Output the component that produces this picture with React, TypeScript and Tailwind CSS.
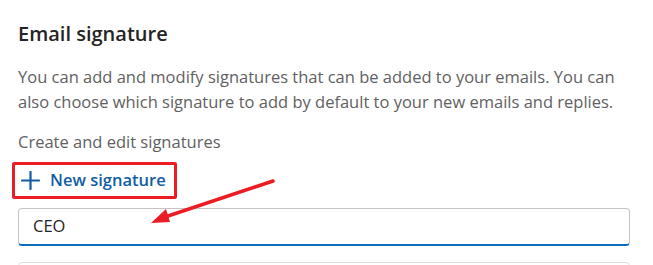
import React from "react";

export default function App() {
  return (
    <div
      className="relative w-[653px] h-[265px] overflow-hidden bg-white pl-[18px] pr-[23px]"
      style={{ fontFamily: '"Open Sans", "Noto Sans", sans-serif' }}
    >
      <h2 className="pt-[20px] text-[20px] leading-[28px] font-semibold text-[#242424]">
        Email signature
      </h2>
      <p className="mt-[16px] text-[16.5px] leading-[25px] text-[#616161] whitespace-nowrap">
        You can add and modify signatures that can be added to your emails. You can
        <br />
        also choose which signature to add by default to your new emails and replies.
      </p>
      <p className="mt-[17px] text-[16.5px] leading-[22px] text-[#616161]">
        Create and edit signatures
      </p>
      <div className="relative mt-[11px] flex h-[32px] items-center gap-[10px] pl-[3px]">
        <svg width="19" height="19" viewBox="0 0 19 19" className="text-[#115ea3]">
          <path d="M9.5 1v17M1 9.5h17" stroke="currentColor" strokeWidth="2.2" strokeLinecap="round" />
        </svg>
        <span className="text-[16.5px] font-semibold text-[#115ea3]">New signature</span>
        <div className="absolute left-[-6px] top-[-2px] h-[37px] w-[165px] border-[3px] border-[#ec1c24] rounded-[2px]" />
      </div>
      <div className="mt-[12px] flex h-[38px] items-center rounded-[4px] border border-[#c4c4c4] border-b-[2px] border-b-[#0f6cbd] pl-[14px] text-[16.5px] text-[#242424]">
        CEO
      </div>
      <div className="mt-[16px] h-[20px] rounded-[4px] border border-[#e0e0e0]" />
      <svg className="absolute left-0 top-0" width="653" height="265" viewBox="0 0 653 265">
        <line x1="273" y1="181" x2="162" y2="218" stroke="#ec1c24" strokeWidth="3.5" strokeLinecap="round" />
        <polygon points="151,223 166,209 170,222" fill="#ec1c24" />
      </svg>
    </div>
  );
}
